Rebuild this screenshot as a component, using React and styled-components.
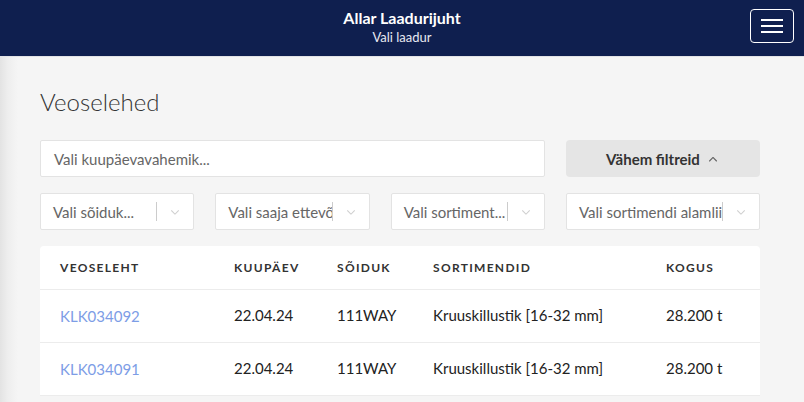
import React from "react";
import styled, { createGlobalStyle } from "styled-components";

const Global = createGlobalStyle`
  html, body { margin: 0; padding: 0; }
  body {
    background: #f5f5f5;
    font-family: Lato, "Open Sans", Arial, sans-serif;
    color: #222;
    -webkit-font-smoothing: antialiased;
  }
`;

const Page = styled.div`
  min-height: 402px;
  display: flex;
  flex-direction: column;
`;

const TopBar = styled.header`
  position: relative;
  height: 56px;
  background: #0f1f4f;
  border-bottom: 1px solid #e2e3e6;
  display: flex;
  flex-direction: column;
  align-items: center;
  justify-content: center;
  color: #fff;
`;

const Brand = styled.div`
  font-size: 16px;
  font-weight: 700;
  line-height: 20px;
  margin-top: -2px;
`;

const SubBrand = styled.div`
  font-size: 13px;
  line-height: 18px;
  color: #e8eaf2;
`;

const MenuButton = styled.button`
  position: absolute;
  right: 10px;
  top: 9px;
  width: 44px;
  height: 34px;
  border: 1px solid #fff;
  border-radius: 4px;
  background: transparent;
  display: flex;
  flex-direction: column;
  align-items: center;
  justify-content: center;
  gap: 4px;
  padding: 0;
`;

const MenuLine = styled.span`
  display: block;
  width: 22px;
  height: 2px;
  background: #fff;
`;

const Main = styled.main`
  flex: 1;
  padding: 30px 44px 0 40px;
  background: linear-gradient(to right, #e3e3e3 0px, #eeeeee 8px, #f5f5f5 18px);
`;

const Title = styled.h1`
  margin: 0;
  font-size: 24px;
  line-height: 30px;
  font-weight: 300;
  color: #333;
`;

const Filters = styled.div`
  margin-top: 23px;
  display: grid;
  grid-template-columns: 1fr 1fr 1fr 194px;
  column-gap: 21px;
  row-gap: 16px;
`;

const DateInput = styled.div`
  grid-column: 1 / 4;
  height: 37px;
  box-sizing: border-box;
  background: #fff;
  border: 1px solid #e3e3e3;
  border-radius: 2px;
  display: flex;
  align-items: center;
  padding-left: 13px;
  font-size: 15px;
  color: #666;
`;

const ToggleButton = styled.button`
  height: 37px;
  border: none;
  border-radius: 4px;
  background: #e5e5e5;
  font-family: inherit;
  font-size: 15px;
  font-weight: 700;
  color: #333;
  display: flex;
  align-items: center;
  justify-content: center;
  gap: 6px;
  padding: 0;
`;

const ToggleIcon = styled.span`
  display: flex;
  color: #666;
`;

const Select = styled.div`
  height: 37px;
  box-sizing: border-box;
  background: #fff;
  border: 1px solid #e3e3e3;
  border-radius: 2px;
  display: flex;
  align-items: center;
  min-width: 0;
`;

const SelectValue = styled.div`
  flex: 1;
  min-width: 0;
  overflow: hidden;
  white-space: nowrap;
  padding-left: 12px;
  font-size: 15px;
  color: #666;
`;

const Separator = styled.span`
  width: 1px;
  align-self: stretch;
  margin: 8px 0;
  background: #cccccc;
`;

const Indicator = styled.span`
  width: 36px;
  display: flex;
  align-items: center;
  justify-content: center;
  color: #cfcfcf;
`;

const Card = styled.div`
  margin-top: 16px;
  background: #fff;
  border-radius: 4px 4px 0 0;
`;

const Row = styled.div`
  display: grid;
  grid-template-columns: 194px 103px 96px 233px 1fr;
  align-items: center;
  box-sizing: border-box;
  height: ${(p) => (p.$head ? "44px" : "53px")};
  padding-bottom: ${(p) => (p.$head ? "0" : "2px")};
  border-bottom: 1px solid #ececec;
  & > *:first-child { padding-left: 20px; }
`;

const HeadCell = styled.div`
  font-size: 12px;
  font-weight: 700;
  letter-spacing: 1.3px;
  text-transform: uppercase;
  color: #333;
`;

const Cell = styled.div`
  font-size: 15px;
  color: #222;
  white-space: nowrap;
`;

const LinkCell = styled.a`
  font-size: 15px;
  color: #7d9de6;
  text-decoration: none;
`;

const Chevron = ({ up }) => (
  <svg width="14" height="14" viewBox="0 0 20 20" fill="currentColor">
    {up ? (
      <path d="M15.5 13.4c-.3.3-.8.3-1.1 0L10 9 5.6 13.4c-.3.3-.8.3-1.1 0-.3-.3-.3-.8 0-1.1l5-5c.3-.3.8-.3 1.1 0l5 5c.2.3.2.8-.1 1.1z" />
    ) : (
      <path d="M4.5 7.6c.3-.3.8-.3 1.1 0L10 12l4.4-4.4c.3-.3.8-.3 1.1 0 .3.3.3.8 0 1.1l-5 5c-.3.3-.8.3-1.1 0l-5-5c-.2-.3-.2-.8.1-1.1z" />
    )}
  </svg>
);

const selects = [
  "Vali sõiduk...",
  "Vali saaja ettevõtte",
  "Vali sortiment...",
  "Vali sortimendi alamliik",
];

const rows = [
  { id: "KLK034092", date: "22.04.24", car: "111WAY", sort: "Kruuskillustik [16-32 mm]", qty: "28.200 t" },
  { id: "KLK034091", date: "22.04.24", car: "111WAY", sort: "Kruuskillustik [16-32 mm]", qty: "28.200 t" },
];

export default function App() {
  return (
    <Page>
      <Global />
      <TopBar>
        <Brand>Allar Laadurijuht</Brand>
        <SubBrand>Vali laadur</SubBrand>
        <MenuButton aria-label="menu">
          <MenuLine />
          <MenuLine />
          <MenuLine />
        </MenuButton>
      </TopBar>
      <Main>
        <Title>Veoselehed</Title>
        <Filters>
          <DateInput>Vali kuupäevavahemik...</DateInput>
          <ToggleButton>
            Vähem filtreid
            <ToggleIcon>
              <Chevron up />
            </ToggleIcon>
          </ToggleButton>
          {selects.map((s) => (
            <Select key={s}>
              <SelectValue>{s}</SelectValue>
              <Separator />
              <Indicator>
                <Chevron />
              </Indicator>
            </Select>
          ))}
        </Filters>
        <Card>
          <Row $head>
            <HeadCell>Veoseleht</HeadCell>
            <HeadCell>Kuupäev</HeadCell>
            <HeadCell>Sõiduk</HeadCell>
            <HeadCell>Sortimendid</HeadCell>
            <HeadCell>Kogus</HeadCell>
          </Row>
          {rows.map((r) => (
            <Row key={r.id}>
              <div>
                <LinkCell href="#">{r.id}</LinkCell>
              </div>
              <Cell>{r.date}</Cell>
              <Cell>{r.car}</Cell>
              <Cell>{r.sort}</Cell>
              <Cell>{r.qty}</Cell>
            </Row>
          ))}
        </Card>
      </Main>
    </Page>
  );
}
